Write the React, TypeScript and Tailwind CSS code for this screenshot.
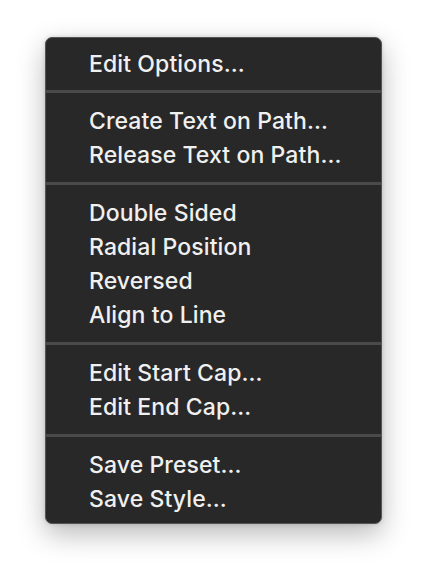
import React from 'react';

const sections: string[][] = [
  ['Edit Options…'],
  ['Create Text on Path…', 'Release Text on Path…'],
  ['Double Sided', 'Radial Position', 'Reversed', 'Align to Line'],
  ['Edit Start Cap…', 'Edit End Cap…'],
  ['Save Preset…', 'Save Style…'],
];

export default function App() {
  return (
    <div className="w-[428px] h-[578px] bg-white pt-[37px] pl-[45px]" style={{ fontFamily: 'Inter, "Noto Sans", sans-serif' }}>
      <div className="w-[337px] h-[487px] rounded-[7px] border border-[#555555] bg-[#282828] shadow-[0_10px_28px_rgba(0,0,0,0.28),0_0_4px_rgba(0,0,0,0.15)] overflow-hidden flex flex-col">
        {sections.map((items, i) => (
          <React.Fragment key={i}>
            {i > 0 && <div className="h-[3px] bg-[#4a4a4a]" />}
            <div className={`flex flex-col ${i === 0 ? 'pt-[8px] pb-[10px]' : i === sections.length - 1 ? 'pt-[10px] pb-[8px]' : 'py-[10.5px]'}`}>
              {items.map((label) => (
                <div key={label} className="h-[34px] flex items-center pt-[2px] pl-[43px] text-[23px] font-medium text-[#f0f0f0] tracking-[0.1px]">
                  {label}
                </div>
              ))}
            </div>
          </React.Fragment>
        ))}
      </div>
    </div>
  );
}
